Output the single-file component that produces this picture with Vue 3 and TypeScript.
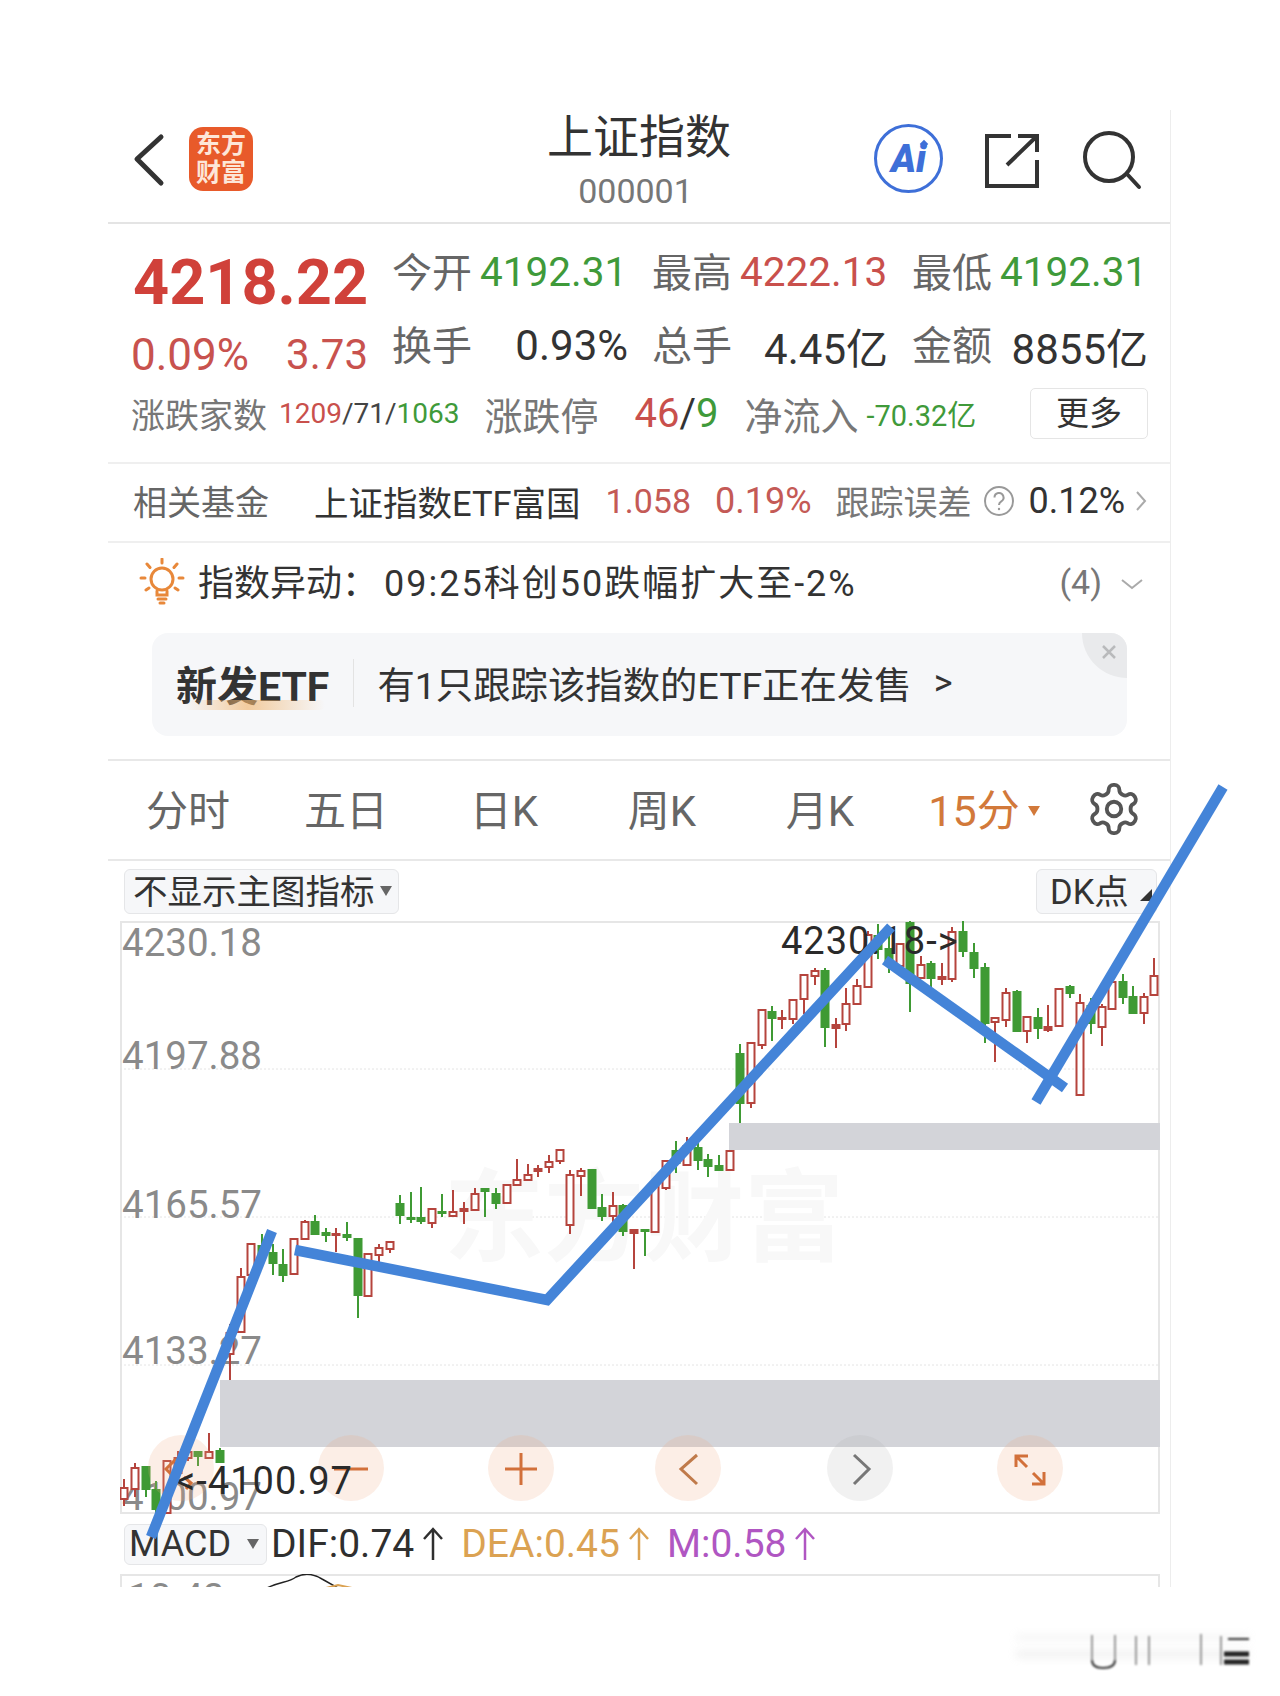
<template>
  <div class="page">
    <div class="screen">
      <header class="top">
        <div class="top-left">
          <svg class="back" width="34" height="56" viewBox="0 0 34 56">
            <path d="M29 6 L5 28 L29 52" />
          </svg>
          <div class="logo">东方<br />财富</div>
        </div>
        <div class="title-box">
          <div class="title">上证指数</div>
          <div class="code">000001</div>
        </div>
        <div class="top-right">
          <div class="ai">
            <span>Ai</span>
            <i class="spark"></i>
          </div>
          <svg class="share" width="56" height="56" viewBox="0 0 56 56">
            <path d="M27 4 H3 V54 H53 V28" />
            <path d="M23 33 L53 4 M34 4 H53 V20" />
          </svg>
          <svg class="search" width="60" height="60" viewBox="0 0 60 60">
            <circle cx="27" cy="27" r="24" />
            <path d="M45 44 L57 57" />
          </svg>
        </div>
      </header>

      <section class="stats">
        <div class="stats-main">
          <div class="price-col">
            <div class="price">4218.22</div>
            <div class="change"><span>0.09%</span><span class="change-b">3.73</span></div>
          </div>
          <div class="quote-grid">
            <div class="pair tight" v-for="q in quotesTop" :key="q.label">
              <span class="lbl">{{ q.label }}</span>
              <span :class="q.cls">{{ q.value }}</span>
            </div>
            <div class="pair" v-for="q in quotesBottom" :key="q.label">
              <span class="lbl">{{ q.label }}</span>
              <span class="dark">{{ q.value }}</span>
            </div>
          </div>
        </div>
        <div class="stats-sub">
          <span class="sub-a">涨跌家数</span>
          <span class="sub-b"><em class="red">1209</em>/71/<em class="green">1063</em></span>
          <span class="sub-c">涨跌停</span>
          <span class="sub-d"><em class="red">46</em>/<em class="green">9</em></span>
          <span class="sub-e">净流入</span>
          <span class="sub-f green">-70.32亿</span>
          <button class="more">更多</button>
        </div>
      </section>

      <section class="fund">
        <span class="fund-a">相关基金</span>
        <span class="fund-b">上证指数ETF富国</span>
        <span class="fund-c">1.058</span>
        <span class="fund-d">0.19%</span>
        <span class="fund-e">跟踪误差</span>
        <svg class="help" width="32" height="32" viewBox="0 0 32 32">
          <circle cx="16" cy="16" r="14" />
          <path d="M11.5 12.5 a4.5 4.5 0 1 1 6.8 3.8 c-1.6 1 -2.3 1.8 -2.3 3.6" />
          <circle class="dot" cx="16" cy="24" r="1.2" />
        </svg>
        <span class="fund-f">0.12%</span>
        <svg class="fund-arrow" width="12" height="24" viewBox="0 0 12 24">
          <path d="M2 3 L10 12 L2 21" />
        </svg>
      </section>

      <section class="notice">
        <div class="notice-row">
          <svg class="sun" width="46" height="48" viewBox="0 0 46 48">
            <circle cx="23" cy="21" r="11" />
            <path d="M18 33 V37 H28 V33 M19 41 H27 M21 45 H25" />
            <path d="M23 1 V5 M8 6 L11 9.5 M38 6 L35 9.5 M2 20 H6 M40 20 H44 M7 32 L10 30 M39 32 L36 30" />
          </svg>
          <span class="notice-title">指数异动：</span>
          <span class="notice-text">09:25科创50跌幅扩大至-2%</span>
          <span class="notice-count">(4)</span>
          <svg class="notice-arrow" width="24" height="12" viewBox="0 0 24 12">
            <path d="M2 2 L12 10 L22 2" />
          </svg>
        </div>
        <div class="banner">
          <span class="banner-tag">新发ETF</span>
          <i class="banner-line"></i>
          <span class="banner-text">有1只跟踪该指数的ETF正在发售</span>
          <span class="banner-go">&gt;</span>
          <div class="banner-close">
            <svg width="16" height="16" viewBox="0 0 16 16"><path d="M2 2 L14 14 M14 2 L2 14" /></svg>
          </div>
        </div>
      </section>

      <nav class="tabs">
        <span v-for="t in tabs" :key="t" class="tab">{{ t }}</span>
        <span class="tab active">15分<i class="tab-caret"></i></span>
        <svg class="gear" width="58" height="58" viewBox="0 0 24 24">
          <path d="M12.22 2h-.44a2 2 0 0 0-2 2v.18a2 2 0 0 1-1 1.73l-.43.25a2 2 0 0 1-2 0l-.15-.08a2 2 0 0 0-2.73.73l-.22.38a2 2 0 0 0 .73 2.73l.15.1a2 2 0 0 1 1 1.72v.51a2 2 0 0 1-1 1.74l-.15.09a2 2 0 0 0-.73 2.73l.22.38a2 2 0 0 0 2.73.73l.15-.08a2 2 0 0 1 2 0l.43.25a2 2 0 0 1 1 1.73V20a2 2 0 0 0 2 2h.44a2 2 0 0 0 2-2v-.18a2 2 0 0 1 1-1.73l.43-.25a2 2 0 0 1 2 0l.15.08a2 2 0 0 0 2.73-.73l.22-.39a2 2 0 0 0-.73-2.73l-.15-.08a2 2 0 0 1-1-1.74v-.5a2 2 0 0 1 1-1.74l.15-.09a2 2 0 0 0 .73-2.73l-.22-.38a2 2 0 0 0-2.73-.73l-.15.08a2 2 0 0 1-2 0l-.43-.25a2 2 0 0 1-1-1.73V4a2 2 0 0 0-2-2z" />
          <circle cx="12" cy="12" r="3" />
        </svg>
      </nav>

      <div class="toolbar">
        <div class="pick pick-main"><span class="pick-text">不显示主图指标</span><i class="caret"></i></div>
        <div class="pick pick-dk"><span class="pick-text">DK点</span><svg width="12" height="12" viewBox="0 0 12 12"><path d="M0 12 H12 V0 Z" /></svg></div>
      </div>

      <div class="chart">
        <svg width="1040" height="593" viewBox="120 920 1040 593">
          <rect x="121" y="921" width="1038" height="591" fill="#fff" stroke="#e6e6e6" stroke-width="2" />
          <rect x="729" y="1122" width="431" height="27" fill="#d3d4d9" />
          <rect x="220" y="1379" width="940" height="67" fill="#d3d4d9" />
          <path class="grid" d="M120 1068 H1160 M120 1216 H1160 M120 1364 H1160" />
          <text class="watermark" x="444" y="1252">东方财富</text>
          <text v-for="l in axisLabels" :key="l.t" class="axis" x="122" :y="l.y">{{ l.t }}</text>
          <g v-for="c in candles" :key="c.x">
            <path class="wick" :stroke="c.color" :d="`M${c.x} ${c.hi} V${c.lo}`" />
            <rect
              :x="c.x - 3.5"
              :y="c.top"
              width="7"
              :height="c.h"
              :fill="c.fill"
              :stroke="c.color"
              stroke-width="2"
            />
          </g>
          <circle v-for="b in roundBtns" :key="b.x" :cx="b.x" cy="1467" r="33" :fill="b.fill" />
          <path class="ico" d="M176 1458 L166 1468 L176 1478 M184 1476 L191 1482 L186 1488" />
          <path class="ico" d="M334 1468 H368" />
          <path class="ico" d="M505 1468 H537 M521 1452 V1484" />
          <path class="ico tan" d="M697 1454 L681 1468 L697 1483" />
          <path class="ico grey" d="M854 1454 L869 1468 L854 1483" />
          <path class="ico" d="M1016 1455 L1027 1466 M1016 1466 V1455 H1028 M1033 1472 L1044 1483 M1044 1471 V1483 H1032" />
          <text class="mark" x="781" y="953">4230.18-&gt;</text>
          <text class="mark" x="176" y="1493">&lt;-4100.97</text>
        </svg>
      </div>

      <div class="macd">
        <div class="pick pick-macd"><span class="pick-text">MACD</span><i class="caret"></i></div>
        <span v-for="m in macd" :key="m.t" class="macd-val" :style="{ color: m.color }">
          {{ m.t }}
          <svg width="20" height="34" viewBox="0 0 20 34" :stroke="m.color">
            <path d="M10 33 V2 M1 12 L10 2 L19 12" />
          </svg>
        </span>
      </div>

      <div class="lower">
        <svg width="1040" height="14" viewBox="120 1573 1040 14">
          <path class="lower-frame" d="M121 1590 V1574 H1159 V1590" />
          <text class="axis" x="128" y="1610">10.43</text>
          <path class="lower-black" d="M267 1587 C280 1580 288 1582 296 1576 C304 1572 312 1572 322 1578 L338 1587" />
          <path class="lower-orange" d="M326 1587 L338 1584 L352 1587" />
        </svg>
      </div>
    </div>

    <!-- drawn on top of the screenshot, so they sit over everything -->
    <svg class="overlay" width="1280" height="1696" viewBox="0 0 1280 1696">
      <g class="pen">
        <path d="M151 1537 L272 1231" />
        <path d="M295 1250 L547 1300 L891 927" />
        <path d="M885 960 L1065 1088" />
        <path d="M1036 1102 L1223 787" />
      </g>
      <g class="ghost-soft">
        <rect x="1016" y="1635" width="233" height="5" />
        <rect x="1016" y="1650" width="233" height="8" />
      </g>
      <g class="ghost">
        <path class="ghost-side" d="M1092 1635 V1660 M1115 1635 V1660 M1136 1636 V1665 M1149 1636 V1665 M1201 1634 V1665 M1221 1636 V1665" />
        <path class="ghost-bar" d="M1092 1660 Q1092 1668 1103 1668 Q1115 1668 1115 1660" />
        <path class="ghost-bar" d="M1228 1639 H1249" />
        <path class="ghost-bar thick" d="M1224 1654 H1249 M1224 1662 H1249" />
      </g>
    </svg>
  </div>
</template>

<script setup lang="ts">
type Kind = 'h' | 'g' | 'r'

const quotesTop = [
  { label: '今开', value: '4192.31', cls: 'green' },
  { label: '最高', value: '4222.13', cls: 'red' },
  { label: '最低', value: '4192.31', cls: 'green' }
]
const quotesBottom = [
  { label: '换手', value: '0.93%' },
  { label: '总手', value: '4.45亿' },
  { label: '金额', value: '8855亿' }
]
const tabs = ['分时', '五日', '日K', '周K', '月K']

const axisLabels = [
  { t: '4230.18', y: 955 },
  { t: '4197.88', y: 1068 },
  { t: '4165.57', y: 1217 },
  { t: '4133.27', y: 1363 },
  { t: '4100.97', y: 1509 }
]

const roundBtns = [
  { x: 181, fill: 'rgba(240,170,130,0.2)' },
  { x: 351, fill: 'rgba(240,170,130,0.2)' },
  { x: 521, fill: 'rgba(240,170,130,0.2)' },
  { x: 688, fill: 'rgba(240,170,130,0.2)' },
  { x: 860, fill: 'rgba(170,170,170,0.16)' },
  { x: 1030, fill: 'rgba(240,170,130,0.2)' }
]

const macd = [
  { t: 'DIF:0.74', color: '#2f2f2f' },
  { t: 'DEA:0.45', color: '#dba252' },
  { t: 'M:0.58', color: '#b056c2' }
]

// x, high, low, body top, body bottom, kind - read off the screenshot, page coordinates
const raw: [number, number, number, number, number, Kind][] = [
  [124, 1478, 1505, 1487, 1498, 'h'],
  [135, 1462, 1496, 1467, 1488, 'h'],
  [146, 1466, 1496, 1466, 1488, 'g'],
  [156, 1480, 1512, 1489, 1508, 'g'],
  [167, 1460, 1512, 1460, 1512, 'h'],
  [178, 1450, 1474, 1457, 1472, 'h'],
  [188, 1448, 1460, 1451, 1457, 'h'],
  [198, 1451, 1465, 1451, 1455, 'g'],
  [209, 1432, 1457, 1451, 1457, 'h'],
  [220, 1447, 1461, 1450, 1461, 'g'],
  [230, 1323, 1379, 1332, 1353, 'h'],
  [241, 1267, 1331, 1276, 1331, 'h'],
  [251, 1243, 1274, 1243, 1274, 'h'],
  [262, 1233, 1267, 1245, 1255, 'g'],
  [273, 1243, 1274, 1252, 1262, 'g'],
  [283, 1248, 1281, 1264, 1274, 'g'],
  [294, 1238, 1273, 1238, 1273, 'h'],
  [305, 1219, 1238, 1221, 1238, 'h'],
  [315, 1214, 1233, 1221, 1233, 'g'],
  [326, 1227, 1241, 1232, 1234, 'g'],
  [336, 1227, 1251, 1233, 1234, 'r'],
  [347, 1221, 1240, 1234, 1236, 'g'],
  [358, 1238, 1317, 1238, 1294, 'g'],
  [368, 1253, 1295, 1253, 1295, 'h'],
  [379, 1243, 1263, 1247, 1254, 'h'],
  [390, 1241, 1252, 1241, 1248, 'h'],
  [400, 1194, 1223, 1203, 1214, 'g'],
  [411, 1191, 1222, 1217, 1218, 'g'],
  [421, 1186, 1223, 1217, 1220, 'g'],
  [432, 1208, 1227, 1208, 1222, 'h'],
  [442, 1193, 1216, 1211, 1212, 'g'],
  [453, 1189, 1215, 1211, 1215, 'h'],
  [464, 1201, 1223, 1208, 1210, 'r'],
  [475, 1187, 1209, 1193, 1209, 'h'],
  [485, 1187, 1216, 1188, 1190, 'g'],
  [496, 1187, 1208, 1193, 1202, 'g'],
  [507, 1184, 1202, 1184, 1202, 'h'],
  [517, 1158, 1184, 1179, 1184, 'h'],
  [528, 1163, 1179, 1174, 1179, 'h'],
  [538, 1164, 1176, 1168, 1170, 'r'],
  [549, 1154, 1172, 1161, 1166, 'h'],
  [560, 1149, 1163, 1149, 1160, 'h'],
  [570, 1169, 1233, 1174, 1224, 'h'],
  [581, 1167, 1195, 1170, 1175, 'h'],
  [592, 1169, 1207, 1169, 1207, 'g'],
  [602, 1193, 1220, 1207, 1215, 'g'],
  [613, 1191, 1222, 1205, 1215, 'h'],
  [623, 1203, 1235, 1205, 1230, 'g'],
  [634, 1229, 1268, 1229, 1232, 'r'],
  [645, 1228, 1255, 1229, 1230, 'g'],
  [655, 1185, 1231, 1185, 1231, 'h'],
  [666, 1160, 1189, 1160, 1187, 'h'],
  [676, 1140, 1172, 1150, 1162, 'g'],
  [687, 1136, 1164, 1145, 1164, 'h'],
  [698, 1142, 1169, 1147, 1159, 'g'],
  [708, 1153, 1176, 1159, 1165, 'g'],
  [719, 1154, 1170, 1165, 1169, 'g'],
  [730, 1150, 1169, 1150, 1169, 'h'],
  [740, 1043, 1122, 1053, 1102, 'g'],
  [751, 1042, 1107, 1042, 1102, 'h'],
  [762, 1008, 1048, 1009, 1044, 'h'],
  [772, 1005, 1040, 1011, 1017, 'g'],
  [782, 1009, 1028, 1017, 1018, 'r'],
  [793, 999, 1023, 999, 1018, 'h'],
  [804, 974, 1013, 974, 998, 'h'],
  [815, 967, 984, 970, 975, 'h'],
  [825, 967, 1046, 970, 1026, 'g'],
  [836, 1017, 1047, 1024, 1027, 'r'],
  [846, 987, 1030, 1003, 1023, 'h'],
  [857, 978, 1003, 985, 1003, 'h'],
  [868, 930, 986, 934, 986, 'h'],
  [878, 923, 958, 935, 948, 'g'],
  [889, 935, 972, 948, 962, 'g'],
  [900, 943, 965, 943, 965, 'h'],
  [910, 920, 1011, 922, 982, 'g'],
  [921, 955, 977, 964, 977, 'h'],
  [931, 960, 992, 963, 977, 'g'],
  [942, 962, 984, 976, 978, 'r'],
  [952, 926, 981, 931, 978, 'h'],
  [963, 920, 956, 931, 950, 'g'],
  [974, 942, 977, 952, 967, 'g'],
  [985, 962, 1042, 967, 1022, 'g'],
  [995, 1017, 1061, 1017, 1021, 'h'],
  [1006, 987, 1026, 992, 1019, 'h'],
  [1017, 989, 1030, 991, 1030, 'g'],
  [1027, 1016, 1042, 1016, 1030, 'h'],
  [1038, 1007, 1038, 1017, 1027, 'g'],
  [1048, 1004, 1031, 1026, 1029, 'r'],
  [1059, 988, 1025, 988, 1025, 'h'],
  [1070, 984, 997, 986, 992, 'g'],
  [1080, 993, 1094, 1002, 1094, 'h'],
  [1091, 997, 1033, 1005, 1022, 'g'],
  [1102, 1003, 1045, 1006, 1026, 'h'],
  [1112, 981, 1008, 981, 1008, 'h'],
  [1123, 973, 1003, 981, 996, 'g'],
  [1133, 985, 1012, 996, 1012, 'g'],
  [1144, 992, 1023, 996, 1012, 'h'],
  [1154, 957, 994, 975, 994, 'h']
]

const candles = raw.map(([x, hi, lo, top, bottom, kind]) => {
  const color = kind === 'g' ? '#3f9a34' : '#b5443d'
  return {
    x,
    hi,
    lo,
    top,
    h: bottom - top,
    color,
    fill: kind === 'h' ? '#fff' : color
  }
})
</script>

<style scoped>
.page {
  position: relative;
  width: 1280px;
  height: 1696px;
  padding-top: 110px;
  box-sizing: border-box;
  overflow: hidden;
  background: #fff;
  font-family: Roboto, "Noto Sans CJK SC", sans-serif;
  color: #333;
}

.screen {
  width: 1063px;
  height: 1477px;
  margin-left: 108px;
  box-sizing: border-box;
  border-right: 1px solid #ededed;
  overflow: hidden;
}

.top {
  display: grid;
  grid-template-columns: 437px 188px 1fr;
  height: 114px;
  box-sizing: border-box;
  border-bottom: 2px solid #e4e4e4;
}

.top-left {
  display: flex;
  align-items: center;
  padding: 0 0 0 24px;
  gap: 23px;
  height: 98px;
}

.back path {
  fill: none;
  stroke: #333;
  stroke-width: 5;
  stroke-linecap: round;
  stroke-linejoin: round;
}

.logo {
  width: 64px;
  height: 64px;
  border-radius: 14px;
  background: #e85a2a;
  color: #fde6d8;
  font-size: 25px;
  line-height: 28px;
  font-weight: 700;
  text-align: center;
  padding-top: 4px;
  box-sizing: border-box;
}

.title-box {
  text-align: center;
  padding-top: 2px;
}

.title {
  font-size: 46px;
  line-height: 50px;
  white-space: nowrap;
}

.code {
  font-size: 34px;
  line-height: 40px;
  margin-top: 9px;
  margin-right: 7px;
  color: #777;
}

.top-right {
  display: flex;
  align-items: flex-start;
  padding: 14px 0 0 141px;
}

.ai {
  position: relative;
  width: 69px;
  height: 69px;
  box-sizing: border-box;
  border: 3px solid #3e6fd8;
  border-radius: 50%;
  display: flex;
  align-items: center;
  justify-content: center;
  color: #3e6fd8;
  font-size: 38px;
  font-weight: 900;
  font-style: italic;
}

.spark {
  position: absolute;
  top: 14px;
  right: 13px;
  width: 6px;
  height: 6px;
  background: #3e6fd8;
  transform: rotate(45deg);
}

.share {
  margin: 8px 0 0 41px;
}

.share path {
  fill: none;
  stroke: #333;
  stroke-width: 4;
}

.search {
  margin: 6px 0 0 42px;
}

.search circle,
.search path {
  fill: none;
  stroke: #333;
  stroke-width: 4;
  stroke-linecap: round;
}

.stats {
  height: 240px;
  box-sizing: border-box;
  padding: 14px 22px 0 23px;
  border-bottom: 2px solid #efefef;
}

.stats-main {
  display: flex;
}

.price-col {
  width: 261px;
}

.price {
  padding: 2px 0 0 2px;
  font-size: 63px;
  line-height: 86px;
  font-weight: 700;
  color: #d0413a;
}

.change {
  display: flex;
  justify-content: space-between;
  width: 237px;
  font-size: 44px;
  line-height: 58px;
  color: #c8524e;
}

.change-b {
  font-size: 42px;
}

.quote-grid {
  display: grid;
  grid-template-columns: repeat(3, 234px);
  grid-template-rows: 68px 78px;
  column-gap: 26px;
  font-size: 40.5px;
}

.pair {
  display: flex;
  justify-content: space-between;
  align-items: center;
  height: 68px;
  white-space: nowrap;
}

.pair:nth-child(n + 4) {
  height: 78px;
  margin-right: -2px;
  font-size: 42px;
}

.pair.tight {
  justify-content: flex-start;
  gap: 8px;
}

.lbl {
  font-size: 40px;
  margin-bottom: 5px;
  color: #666;
}

.dark {
  color: #333;
}

.red {
  color: #c9504c;
}

.green {
  color: #3f9a3a;
}

em {
  font-style: normal;
}

.stats-sub {
  display: flex;
  align-items: center;
  height: 58px;
  white-space: nowrap;
  color: #777;
}

.sub-a {
  font-size: 34px;
}

.sub-b {
  font-size: 28px;
  margin-left: 12px;
  color: #444;
}

.sub-c {
  font-size: 38px;
  margin-left: 25px;
}

.sub-d {
  font-size: 40px;
  margin-left: 36px;
  color: #333;
}

.sub-e {
  font-size: 38px;
  margin-left: 26px;
}

.sub-f {
  font-size: 29px;
  margin-left: 8px;
}

.more {
  margin: 1px 0 0 auto;
  width: 118px;
  height: 51px;
  background: #fff;
  border: 1px solid #e5e5e5;
  border-radius: 5px;
  font: inherit;
  font-size: 33px;
  line-height: 1;
  color: #333;
  padding: 0;
}

.fund {
  display: flex;
  align-items: center;
  height: 79px;
  box-sizing: border-box;
  border-bottom: 2px solid #efefef;
  padding: 0 0 4px 25px;
  font-size: 34px;
  white-space: nowrap;
}

.fund-a {
  color: #666;
}

.fund-b {
  margin-left: 45px;
  font-size: 34.5px;
}

.fund-c {
  margin-left: 25px;
  color: #c45a56;
}

.fund-d {
  margin-left: 24px;
  font-size: 36px;
  color: #c45a56;
}

.fund-e {
  margin-left: 24px;
  color: #777;
}

.help {
  margin-left: 11px;
}

.help circle,
.help path {
  fill: none;
  stroke: #999;
  stroke-width: 2;
}

.help .dot {
  fill: #999;
  stroke: none;
}

.fund-f {
  margin-left: 14px;
  font-size: 36px;
}

.fund-arrow {
  margin-left: 10px;
}

.fund-arrow path {
  fill: none;
  stroke: #aaa;
  stroke-width: 2;
}

.notice {
  height: 218px;
  box-sizing: border-box;
  border-bottom: 2px solid #e8e8e8;
}

.notice-row {
  display: flex;
  align-items: center;
  height: 78px;
  padding-left: 31px;
  font-size: 36px;
  white-space: nowrap;
}

.sun circle,
.sun path {
  fill: none;
  stroke: #e8883a;
  stroke-width: 3;
  stroke-linecap: round;
}

.notice-title {
  margin: 0 0 4px 13px;
}

.notice-text {
  margin: 0 0 4px 6px;
  letter-spacing: 2px;
}

.notice-count {
  margin-left: auto;
  font-size: 34px;
  color: #777;
}

.notice-arrow {
  margin: 4px 26px 0 18px;
}

.notice-arrow path {
  fill: none;
  stroke: #aaa;
  stroke-width: 2;
}

.banner {
  position: relative;
  display: flex;
  align-items: center;
  width: 975px;
  height: 103px;
  margin: 12px 0 0 44px;
  padding: 0 0 4px 24px;
  box-sizing: border-box;
  background: #f6f7f9;
  border-radius: 16px;
  overflow: hidden;
  white-space: nowrap;
}

.banner-tag {
  position: relative;
  font-size: 41px;
  font-weight: 700;
  color: #333;
}

.banner-tag::after {
  content: "";
  position: absolute;
  left: 8px;
  right: 4px;
  bottom: 3px;
  height: 10px;
  border-radius: 5px;
  background: linear-gradient(90deg, rgba(240, 190, 130, 0), rgba(240, 180, 110, 0.65) 45%, rgba(240, 190, 130, 0));
}

.banner-line {
  width: 1px;
  height: 48px;
  margin-left: 24px;
  background: #e3e3e3;
}

.banner-text {
  margin-left: 23px;
  font-size: 37.4px;
}

.banner-go {
  margin-left: 22px;
  font-size: 36px;
}

.banner-close {
  position: absolute;
  top: 0;
  right: 0;
  width: 45px;
  height: 45px;
  background: #e9eaec;
  border-bottom-left-radius: 45px;
}

.banner-close svg {
  position: absolute;
  top: 11px;
  right: 10px;
}

.banner-close path {
  fill: none;
  stroke: #b9babc;
  stroke-width: 2.5;
}

.tabs {
  display: grid;
  grid-template-columns: repeat(6, 158px) 1fr;
  align-items: center;
  height: 100px;
  padding: 0 0 6px 1px;
  box-sizing: border-box;
  border-bottom: 2px solid #e8e8e8;
  font-size: 42px;
  color: #666;
}

.tab {
  text-align: center;
  white-space: nowrap;
}

.active {
  padding-left: 12px;
  font-size: 43px;
  color: #d2793a;
}

.tab-caret {
  display: inline-block;
  margin-left: 8px;
  vertical-align: 10px;
  border-left: 6px solid transparent;
  border-right: 6px solid transparent;
  border-top: 10px solid #d2793a;
}

.gear {
  justify-self: end;
  margin: 4px 27px 0 0;
}

.gear path,
.gear circle {
  fill: none;
  stroke: #555;
  stroke-width: 1.6;
}

.toolbar {
  display: flex;
  justify-content: space-between;
  align-items: center;
  height: 60px;
  padding: 0 13px 0 16px;
}

.pick {
  display: flex;
  align-items: center;
  height: 45px;
  box-sizing: border-box;
  background: #f6f7f9;
  border: 1px solid #e5e6e8;
  border-radius: 6px;
  font-size: 34.5px;
  color: #333;
  white-space: nowrap;
}

.pick-text {
  margin-bottom: 5px;
}

.pick-main {
  width: 275px;
  padding-left: 8px;
}

.pick-dk {
  width: 121px;
  padding-left: 13px;
}

.pick-dk svg {
  margin: 8px 0 0 11px;
}

.pick-dk path {
  fill: #333;
}

.caret {
  display: inline-block;
  margin-left: 5px;
  border-left: 6px solid transparent;
  border-right: 6px solid transparent;
  border-top: 10px solid #666;
}

.chart {
  margin-left: 12px;
  width: 1040px;
  height: 593px;
}

.chart svg {
  display: block;
  font-family: Roboto, "Noto Sans CJK SC", sans-serif;
}

.grid {
  stroke: #e4e4e4;
  stroke-width: 1;
  stroke-dasharray: 2 2;
  fill: none;
}

.watermark {
  font-size: 100px;
  font-weight: 700;
  fill: #f8f8f8;
}

.axis {
  font-size: 38.5px;
  fill: #8a8a8a;
}

.wick {
  fill: none;
  stroke-width: 2;
}

.ico {
  fill: none;
  stroke: #d2703a;
  stroke-width: 3;
}

.ico.tan {
  stroke: #c07a4a;
}

.ico.grey {
  stroke: #777;
}

.mark {
  font-size: 38px;
  letter-spacing: 1px;
  fill: #2a2a2a;
}

.macd {
  display: flex;
  align-items: center;
  height: 60px;
  padding-left: 16px;
  font-size: 39px;
  white-space: nowrap;
}

.pick-macd {
  width: 143px;
  height: 41px;
  padding-left: 4px;
  font-size: 36px;
}

.pick-macd .pick-text {
  margin-bottom: 0;
}

.pick-macd .caret {
  margin-left: 16px;
}

.macd-val {
  display: flex;
  align-items: center;
  gap: 9px;
  margin-left: 18px;
}

.pick-macd + .macd-val {
  margin-left: 4px;
}

.macd-val svg {
  fill: none;
  stroke-width: 2.5;
}

.lower {
  margin-left: 12px;
  width: 1040px;
}

.lower svg {
  display: block;
  font-family: Roboto, sans-serif;
}

.lower-frame {
  fill: none;
  stroke: #e6e6e6;
  stroke-width: 2;
}

.lower-black {
  fill: none;
  stroke: #222;
  stroke-width: 1.5;
}

.lower-orange {
  fill: none;
  stroke: #dba252;
  stroke-width: 2;
}

.overlay {
  position: absolute;
  top: 0;
  left: 0;
  pointer-events: none;
}

.pen path {
  fill: none;
  stroke: #4484d8;
  stroke-width: 10.5;
  stroke-linejoin: miter;
}

.ghost-soft rect {
  fill: #bdbdbd;
  opacity: 0.2;
  filter: blur(4px);
}

.ghost path {
  fill: none;
  stroke-width: 2;
  filter: blur(0.8px);
}

.ghost .ghost-side {
  stroke: #999;
}

.ghost .ghost-bar {
  stroke: #333;
  stroke-width: 2;
}

.ghost .thick {
  stroke: #222;
  stroke-width: 5;
}
</style>
